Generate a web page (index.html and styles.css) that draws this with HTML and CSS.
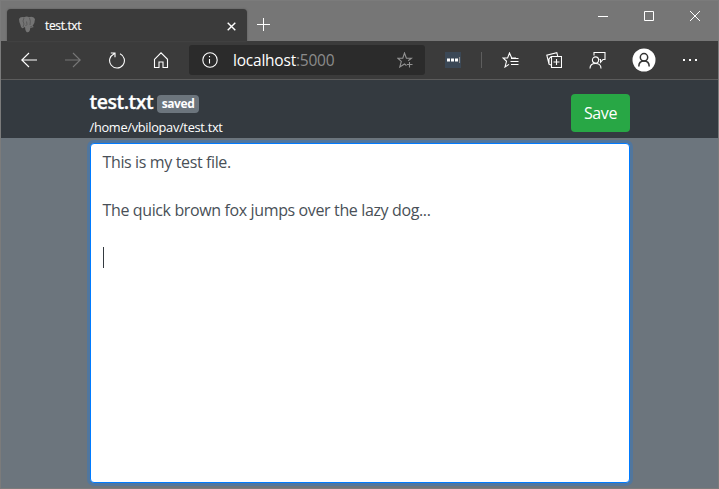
FILE: index.html
```
<!DOCTYPE html>
<html lang="en">
<head>
<meta charset="utf-8">
<title>test.txt</title>
<link rel="stylesheet" href="styles.css">
</head>
<body>
<div class="window">
  <div class="titlebar">
    <div class="tab">
      <svg class="favicon" width="18" height="18" viewBox="0 0 18 18"><path class="elephant" d="M1 3Q2 .5 6 1.200Q9 0 11 1.200Q15 0 17 3Q17 7 14.500 10L16 11L12.500 12Q12 12 12 14Q11 17 8.500 16Q7 14 7 11L5 12Q3 13 2.500 9Q1 6 1 3Z"/><path class="trunk" d="M6 2Q4 5 6 8L5 11M11.500 2Q13 5 12 9M7.500 10Q10 9 8.500 5.500M12 11L14 10.500"/></svg>
      <span class="tab-title">test.txt</span>
      <svg class="tab-close" width="9" height="9" viewBox="0 0 9 9"><path d="M.7.7l7.600 7.600M8.300.7L.7 8.300"/></svg>
    </div>
    <svg class="new-tab" width="13" height="13" viewBox="0 0 13 13"><path d="M6.500 0v13M0 6.500h13"/></svg>
    <div class="window-controls">
      <svg width="10" height="10" viewBox="0 0 10 10"><path d="M0 5.500h10"/></svg>
      <svg width="10" height="10" viewBox="0 0 10 10"><path d="M.5.5h9v9h-9z"/></svg>
      <svg width="10" height="10" viewBox="0 0 10 10"><path d="M0 0l10 10M10 0L0 10"/></svg>
    </div>
  </div>
  <div class="toolbar">
    <div class="navigation">
      <svg width="16" height="16" viewBox="0 0 16 16"><path d="M8 1L.8 8L8 15M1 8h15"/></svg>
      <svg class="disabled" width="16" height="16" viewBox="0 0 16 16"><path d="M8 1l7.200 7L8 15M15 8H0"/></svg>
      <svg width="16" height="17" viewBox="0 0 16 17"><path d="M11 1.800A7.400 7.400 0 1 1 4.800 1.900M1.800 1H6v4.200M5.800 1.200L4.500 2.300"/></svg>
      <svg width="16" height="17" viewBox="0 0 16 17"><path d="M1.500 7.300L8 .8l6.500 6.500v8.200H10v-5.500H6v5.500H1.500z"/></svg>
    </div>
    <div class="address">
      <svg width="16" height="16" viewBox="0 0 16 16"><circle cx="8" cy="8" r="7.200"/><path d="M7.500 7v4.500M7.500 4v1.300"/></svg>
      <span class="url">localhost<span class="port">:5000</span></span>
      <svg class="favorite" width="16" height="16" viewBox="0 0 16 16"><path d="M9.500 13.500L7.500 12l-4.700 3 1.500-5.600L.8 6.200h5L7.500 1l1.900 5.200h5L11.200 8.800M10 12.500h5.500M12.500 10v5.500"/></svg>
    </div>
    <svg class="extension" width="16" height="16" viewBox="0 0 16 16"><path class="extension-bg" d="M0 0h16v16H0z"/><path class="dots" d="M2 6.500h3v3H2zM6 6.500h3v3H6zM10 6.500h3v3h-3z"/><path class="bar" d="M14.500 5v6"/></svg>
    <span class="divider"></span>
    <div class="tools">
      <svg width="17" height="16" viewBox="0 0 17 16"><path d="M14 6H9.700L7.500 1 5.600 6H1l3.500 3.300L3 15l4-2.600M9 6.500h7.500M8.500 9.500h8M9 12.500h7.500"/></svg>
      <svg width="16" height="16" viewBox="0 0 16 16"><path d="M5.500 4.500h10v11h-10zM10.500 7v6M7.500 10h6M5 13l-2-.8L.8 3.200l10-2.500.9 3.500M3 12V7l2-2.500"/></svg>
      <svg width="17" height="17" viewBox="0 0 17 17"><circle cx="6.500" cy="8" r="3.100"/><path d="M1 16.500q0-5 5.500-5t5.500 5M5 3.500v-3h11v7h-2l-2.500 2.800V7.500h-1"/></svg>
      <svg class="profile" width="24" height="24" viewBox="0 0 24 24"><circle class="profile-bg" cx="12" cy="12" r="11.500"/><circle cx="12" cy="9.300" r="3.700"/><path d="M6.800 18.500q0-5.500 5.200-5.500t5.200 5.500"/></svg>
      <svg class="more" width="14" height="2" viewBox="0 0 14 2"><path d="M0 0h2v2H0zM6 0h2v2H6zM12 0h2v2h-2z"/></svg>
    </div>
  </div>
  <header class="file-header">
    <div>
      <div class="heading"><span class="filename">test.txt</span><span class="badge">saved</span></div>
      <div class="path">/home/vbilopav/test.txt</div>
    </div>
    <button class="save">Save</button>
  </header>
  <main class="editor"><p>This is my test file.</p><p>The quick brown fox jumps over the lazy dog...</p><div class="caret"></div></main>
</div>
</body>
</html>
```
FILE: styles.css
```
* { box-sizing: border-box; }
body { margin: 0; font-family: "Open Sans", "Noto Sans", sans-serif; overflow: hidden; }
.window { width: 719px; height: 489px; border: 1px solid #7b7b7b; background: #6c757d; }
svg { display: block; flex: none; fill: none; stroke: #fff; stroke-width: 1.1; }
span { white-space: nowrap; }

.titlebar { height: 40px; display: flex; background: #767676; padding-left: 6px; }
.tab { width: 240px; height: 32px; margin-top: 8px; padding: 0 11px 0 11px; display: flex; align-items: center; background: #3b3b3b; border-radius: 4px 4px 0 0; box-shadow: 0 0 2px #555; }
.favicon .elephant { fill: #747474; stroke: none; }
.favicon .trunk { stroke: #4f4f4f; stroke-width: .7; }
.tab-title { margin-left: 9px; font-size: 12px; letter-spacing: -.35px; color: #fff; -webkit-text-stroke: .15px #fff; }
.tab-close { margin-left: auto; margin-top: 2px; stroke-width: 1.4; }
.new-tab { margin: 17px 0 0 10px; stroke-width: 1; }
.window-controls { display: flex; gap: 36px; margin: 10px 18px 0 auto; }
.window-controls svg { stroke-width: 1; }

.toolbar { height: 39px; display: flex; align-items: center; background: #3b3b3b; border-bottom: 1px solid #5c5c5c; padding-left: 20px; }
.navigation { display: flex; align-items: center; gap: 28px; }
.disabled { stroke: #777; }
.address { width: 236px; height: 30px; margin-left: 20px; padding: 0 12px 0 13px; display: flex; align-items: center; background: #2b2b2b; border-radius: 3px; }
.url { margin-left: 15px; font-size: 15.500px; letter-spacing: -.22px; color: #fff; }
.port { color: #8b8b8b; }
.favorite { margin-left: auto; stroke: #929292; }
.extension { margin-left: 20px; }
.extension .extension-bg { fill: #3b4856; stroke: none; }
.extension .dots { fill: #fff; stroke: none; }
.extension .bar { stroke: #929292; }
.divider { width: 1px; height: 16px; margin-left: 20px; background: #5e5e5e; }
.tools { display: flex; align-items: center; margin-left: 20px; }
.tools svg + svg { margin-left: 27px; }
.tools .profile { margin-left: 26px; stroke: #333; stroke-width: 1.5; }
.profile .profile-bg { fill: #fff; stroke: none; }
.tools .more { margin-left: 27px; fill: #fff; stroke: none; }

.file-header { height: 58px; padding: 8px 88px 0 88.500px; display: flex; justify-content: space-between; align-items: flex-start; background: #343a40; color: #fff; }
.heading { display: flex; height: 28px; align-items: center; }
.filename { width: 63.500px; font-size: 19.500px; line-height: 24px; margin-top: -1px; font-weight: 600; letter-spacing: -.5px; -webkit-text-stroke: .25px #fff; }
.badge { width: 42px; height: 18px; margin: 3px 0 0 4px; border-radius: 4px; background: #6c757d; font-size: 12px; line-height: 18px; text-align: center; font-weight: 700; letter-spacing: -.4px; }
.path { font-size: 12.800px; line-height: 23px; letter-spacing: -.3px; }
.save { width: 59px; height: 38px; margin-top: 6px; padding: 0; border: 0; border-radius: 4px; background: #28a745; color: #fff; font: 16px/38px "Open Sans", sans-serif; letter-spacing: -.4px; }

.editor { width: 540px; height: 340px; margin: 5px 0 0 89px; padding: 6px 11.500px; background: #fff; border: 1px solid #007bff; border-radius: 4px; box-shadow: 0 0 0 3px rgba(0, 123, 255, .25); color: #495057; font-size: 16px; line-height: 24px; letter-spacing: -.37px; }
.editor p { margin: 0 0 24px; }
.caret { width: 1px; height: 21px; margin: 25px 0 0 .5px; background: #343a40; }
```
